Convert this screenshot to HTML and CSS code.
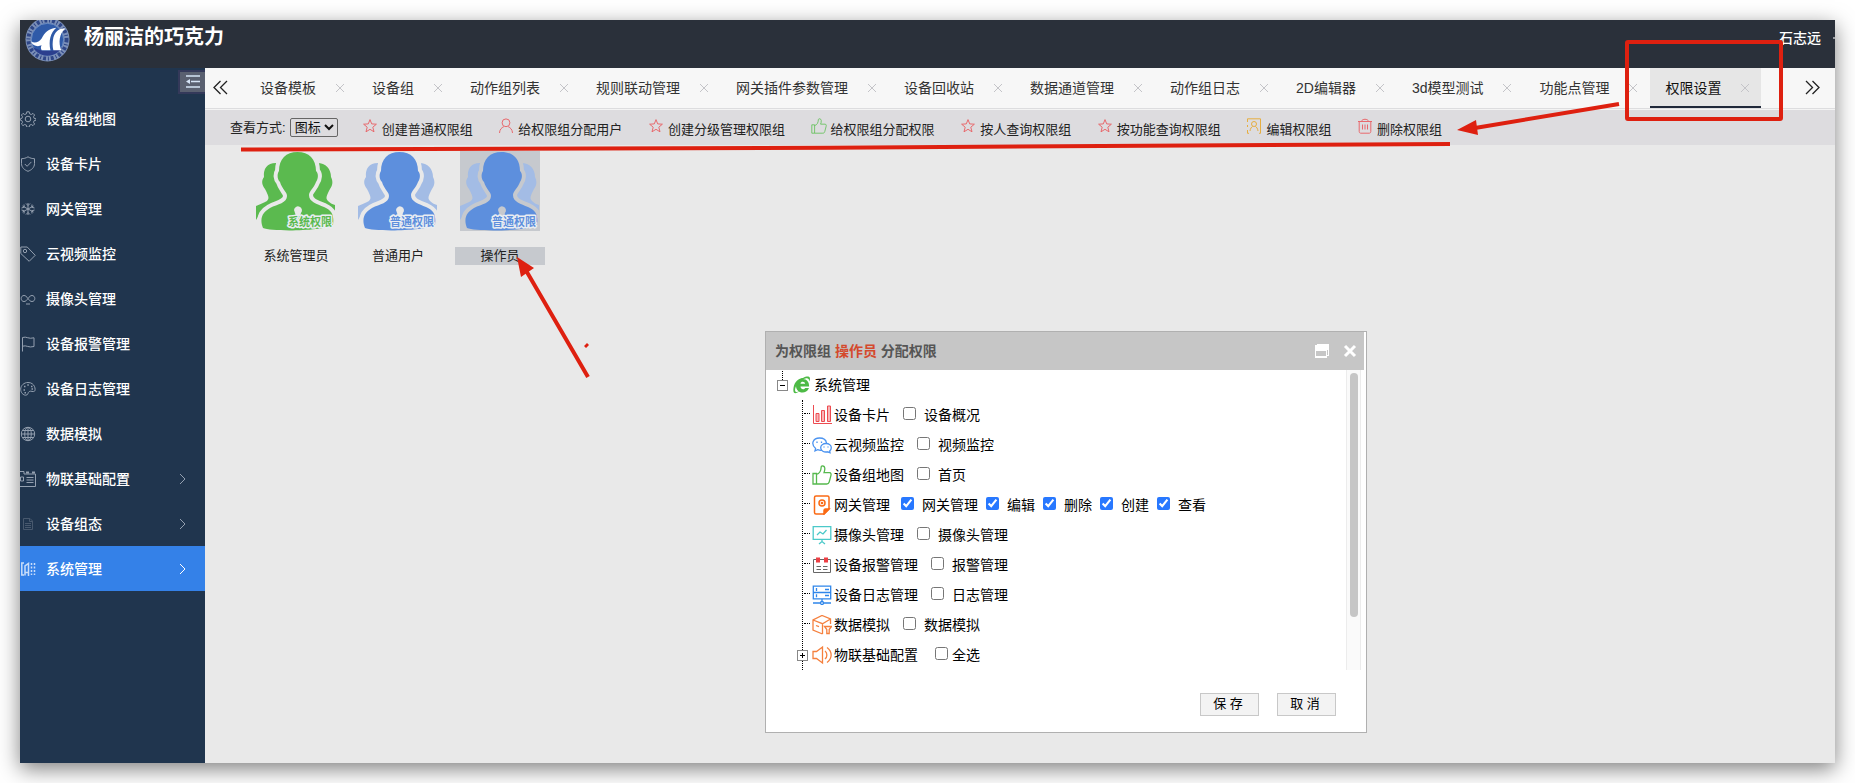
FILE: index.html
```html
<!DOCTYPE html>
<html lang="zh-CN">
<head>
<meta charset="utf-8">
<title>权限设置</title>
<link rel="stylesheet" href="styles.css">
</head>
<body>
<svg class="sprite" aria-hidden="true">
  <symbol id="i-x" viewBox="0 0 10 10"><path d="M1 1l8 8M9 1l-8 8"/></symbol>
  <symbol id="i-chev" viewBox="0 0 8 12"><path d="M1 1l5 5-5 5"/></symbol>
  <symbol id="i-star" viewBox="0 0 16 16"><path d="M8 1.6l1.7 4.3 4.7.3-3.6 3 1.2 4.6L8 11.300l-4 2.500 1.200-4.600-3.600-3 4.700-.3z"/></symbol>
  <symbol id="i-user" viewBox="0 0 16 16"><circle cx="8" cy="4.800" r="3.900"/><path d="M1.500 15c.2-3.500 2-5.300 4.300-6.300M14.500 15c-.2-3.500-2-5.300-4.300-6.300"/></symbol>
  <symbol id="i-thumb" viewBox="0 0 20 20"><path d="M1 8.500h3.500v10.500H1zM4.500 9.500c3.500-1 4.500-4 4.700-7.500.1-1.500 3.300-1.500 3.600 1 .2 1.800-.3 3.500-.8 4.700h5.500c1.600 0 1.800 1.500 1.400 2.900l-1.700 6.400c-.4 1.400-1 2-2.500 2H4.500"/></symbol>
  <symbol id="i-card" viewBox="0 0 16 16"><path d="M3 15.300H1.500V12M1.500 9V7M1.500 4V.8h13v14.500H13"/><circle cx="8" cy="6" r="2.500"/><path d="M4 13c.3-2.500 1.500-4 2.600-4.600M12 13c-.3-2.500-1.500-4-2.600-4.600"/></symbol>
  <symbol id="i-trash" viewBox="0 0 16 16"><path d="M1 3.500h14M4.500 3.300C5 .6 11 .6 11.500 3.300M2.200 3.500v10c0 1 .6 1.700 1.600 1.700h8.400c1 0 1.600-.7 1.600-1.700v-10M5.500 6.500v5M8 6.500v5M10.500 6.500v5"/></symbol>

  <symbol id="s-gear" viewBox="0 0 16 16"><circle cx="8" cy="8" r="2.800"/><path d="M6.800.8h2.400l.4 2 1.700.7 1.700-1.100 1.600 1.600-1.100 1.700.7 1.700 2 .4v1.400l-2 .4-.7 1.700 1.100 1.700-1.600 1.600-1.700-1.100-1.700.7-.4 2H6.800l-.4-2-1.700-.7L3 14.600 1.400 13l1.100-1.700-.7-1.700-1.500-.4V7.800l1.500-.4.7-1.700L1.400 4 3 2.400l1.700 1.100 1.700-.7z"/></symbol>
  <symbol id="s-shield" viewBox="0 0 16 16"><path d="M8 .8c2 1.300 4.300 1.900 6.500 1.900v4.800c0 4-3 6.500-6.500 7.800C4.500 14 1.500 11.500 1.500 7.500V2.700C3.700 2.700 6 2.100 8 .8zM4.800 8l2.300 2.300 4.300-4.400"/></symbol>
  <symbol id="s-snow" viewBox="0 0 16 16"><path d="M8 2v12M2.500 5l11 6M13.500 5l-11 6M6 2.500l2 2 2-2M6 13.500l2-2 2 2M1.500 7l2.700-.8L4 3.500M14.500 9l-2.700.8.200 2.700M1.500 9l2.700.8-.2 2.700M14.500 7l-2.700-.8.200-2.700"/></symbol>
  <symbol id="s-tag" viewBox="0 0 16 16"><path d="M.8 1h6.400l8 8.300-6 6L.8 7.500z"/><circle cx="5" cy="5" r="1.700"/></symbol>
  <symbol id="s-inf" viewBox="0 0 16 16"><path d="M8 7.500C6.500 5.500 5.500 4.500 4 4.500 2.300 4.500 1.200 5.700 1.200 7.500S2.300 10.500 4 10.500 6.500 9.500 8 7.500 10.500 4.500 12 4.500s2.800 1.200 2.800 3-1.100 3-2.800 3S9.500 9.500 8 7.500zM6 13h4"/></symbol>
  <symbol id="s-flag" viewBox="0 0 16 16"><path d="M2.500 15.500V1.500c4-1.500 6 2 11.500.3v8.700c-5.500 1.700-7.500-1.800-11.500-.3"/></symbol>
  <symbol id="s-pal" viewBox="0 0 16 16"><path d="M8 1.500c-4 0-7.300 3-7.300 6.700 0 3.500 2.500 6 5 6 2.800 0 1.800-2.700 3.600-3.700 1.700-1 3.800.8 5.200-.3C16 9 15 1.500 8 1.500z"/><path stroke-width="1.500" d="M4 5.500h1.500M7.300 4h1.500M11 5.500h1.500M3.500 9H5M4.500 11.700H6M11.500 8H13"/></symbol>
  <symbol id="s-globe" viewBox="0 0 16 16"><circle cx="8" cy="8" r="6.700"/><ellipse cx="8" cy="8" rx="3.300" ry="6.700"/><path d="M8 1.300v13.400M1.300 8h13.400M2.500 4.500h11M2.500 11.500h11"/></symbol>
  <symbol id="s-cfg" viewBox="0 0 16 16"><path d="M0 15.500h15.500V3H4V.5H0M.5 6h3v4h-3zM6.500 6.500h7M6.500 9h7M6.500 11.500h7"/><path stroke-width="2" d="M6 1.500h3M12 1.500h3"/></symbol>
  <symbol id="s-doc" viewBox="0 0 16 16"><path d="M3.500 2.500h6.500l2.500 2.500v8.500h-9zM9.500 2.500v3h3M5 7.500h6M5 9.500h6M5 11.500h6"/></symbol>
  <symbol id="s-sys" viewBox="0 0 16 16"><path stroke-width="1.500" d="M4 2H1.800v12H4M5 14.500V5l3.500-2.500V15M5 11.500h3"/><path stroke-width="1.500" stroke-dasharray="2 1.500" d="M11.500 2v12M14.500 2v12"/></symbol>

  <symbol id="person" viewBox="0 0 80 80">
    <g class="back">
      <path d="M20 12C11 12 7 18 8 26c-3 4-2 8 1 12 3 6 5 9 2 12C8 52 4 53 0 55v14c4-8 14-12 26-16l6-8-12-20z"/>
      <path d="M61 12c9 0 14 6 14 14 2 4 2 8-1 12-3 6-5 9-2 12 2 2 4 3 7 4v14C76 60 70 57 60 53l-7-8 9-20z"/>
    </g>
    <path class="front" d="M41.500 1C53 1 60 8 60 20c3 3 2 8 0 11-2 6-7 9-7 13 0 7 8 9 15 12 9 4 10 9 9 18-8 6-61 7-70 3-4-10 0-16 7-20 8-4 17-5 17-12 0-4-5-7-7-14-3-3-3-8-1-11C23 8 30 1 41.500 1z"/>
    <path class="hole" d="M38 59a4 4 0 1 1 7 3l-1 3h-4l-1-3z"/>
  </symbol>
</svg>

<div class="window">
  <header class="topbar">
    <svg class="logo" viewBox="0 0 46 46" aria-hidden="true">
      <circle cx="23" cy="23" r="22.500" fill="#7c90b8"/>
      <circle cx="23" cy="23" r="19.500" fill="none" stroke="#2e4687" stroke-width="4" stroke-dasharray="3 2 1 2"/>
      <circle cx="23" cy="23" r="16.500" fill="#2f5aa8" stroke="#6d8cc2"/>
      <path d="M8 31c8 5 22 5 30 0-3 5-8 8.500-15 8.500S11 36 8 31z" fill="#2b3f8e"/>
      <path d="M6 25c4 2 8 1 11-3 3-6 7-10 15-11-6 5-8 13-6 23h-9c-1-2-1-3 0-5-5 2-9 0-11-4z" fill="#fff"/>
      <path d="M41 12c-6-1-10 3-12 9-1 5-1 9 0 13h8c-3-8-2-17 4-22z" fill="#fff"/>
    </svg>
    <h1 class="brand">杨丽洁的巧克力</h1>
    <button class="account" type="button">石志远<span class="caret"></span></button>
  </header>

  <div class="body">
    <nav class="sidebar">
      <button class="collapse" type="button" aria-label="收起菜单">
        <svg viewBox="0 0 14 14"><path d="M0 1h14M5 6.500h9M0 12h14"/><path class="solid" d="M0 6.500l4-2.500v5z"/></svg>
      </button>
      <a class="nav" href="#"><svg><use href="#s-gear"/></svg><span>设备组地图</span></a>
      <a class="nav" href="#"><svg><use href="#s-shield"/></svg><span>设备卡片</span></a>
      <a class="nav" href="#"><svg><use href="#s-snow"/></svg><span>网关管理</span></a>
      <a class="nav" href="#"><svg><use href="#s-tag"/></svg><span>云视频监控</span></a>
      <a class="nav" href="#"><svg><use href="#s-inf"/></svg><span>摄像头管理</span></a>
      <a class="nav" href="#"><svg><use href="#s-flag"/></svg><span>设备报警管理</span></a>
      <a class="nav" href="#"><svg><use href="#s-pal"/></svg><span>设备日志管理</span></a>
      <a class="nav" href="#"><svg><use href="#s-globe"/></svg><span>数据模拟</span></a>
      <a class="nav" href="#"><svg><use href="#s-cfg"/></svg><span>物联基础配置</span><svg class="chev"><use href="#i-chev"/></svg></a>
      <a class="nav" href="#"><svg class="dim"><use href="#s-doc"/></svg><span>设备组态</span><svg class="chev"><use href="#i-chev"/></svg></a>
      <a class="nav active" href="#"><svg><use href="#s-sys"/></svg><span>系统管理</span><svg class="chev"><use href="#i-chev"/></svg></a>
    </nav>

    <main class="main">
      <div class="tabbar">
        <button class="scroll" type="button" aria-label="向左"><svg viewBox="0 0 15 15"><path d="M7.500 1L1 7.500 7.500 14M14 1L7.500 7.500 14 14"/></svg></button>
        <div class="tabs">
          <div class="tab"><a href="#">设备模板</a><button type="button" aria-label="关闭"><svg><use href="#i-x"/></svg></button></div>
          <div class="tab"><a href="#">设备组</a><button type="button" aria-label="关闭"><svg><use href="#i-x"/></svg></button></div>
          <div class="tab"><a href="#">动作组列表</a><button type="button" aria-label="关闭"><svg><use href="#i-x"/></svg></button></div>
          <div class="tab"><a href="#">规则联动管理</a><button type="button" aria-label="关闭"><svg><use href="#i-x"/></svg></button></div>
          <div class="tab"><a href="#">网关插件参数管理</a><button type="button" aria-label="关闭"><svg><use href="#i-x"/></svg></button></div>
          <div class="tab"><a href="#">设备回收站</a><button type="button" aria-label="关闭"><svg><use href="#i-x"/></svg></button></div>
          <div class="tab"><a href="#">数据通道管理</a><button type="button" aria-label="关闭"><svg><use href="#i-x"/></svg></button></div>
          <div class="tab"><a href="#">动作组日志</a><button type="button" aria-label="关闭"><svg><use href="#i-x"/></svg></button></div>
          <div class="tab"><a href="#">2D编辑器</a><button type="button" aria-label="关闭"><svg><use href="#i-x"/></svg></button></div>
          <div class="tab"><a href="#">3d模型测试</a><button type="button" aria-label="关闭"><svg><use href="#i-x"/></svg></button></div>
          <div class="tab"><a href="#">功能点管理</a><button type="button" aria-label="关闭"><svg><use href="#i-x"/></svg></button></div>
          <div class="tab current"><a href="#">权限设置</a><button type="button" aria-label="关闭"><svg><use href="#i-x"/></svg></button></div>
        </div>
        <button class="scroll right" type="button" aria-label="向右"><svg viewBox="0 0 15 15"><path d="M1 1l6.500 6.500L1 14M7.500 1L14 7.500 7.500 14"/></svg></button>
      </div>

      <div class="toolbar">
        <label for="view">查看方式:</label>
        <select id="view"><option>图标</option></select>
        <div class="actions">
          <button class="red" type="button"><svg><use href="#i-star"/></svg>创建普通权限组</button>
          <button class="red" type="button"><svg><use href="#i-user"/></svg>给权限组分配用户</button>
          <button class="red" type="button"><svg><use href="#i-star"/></svg>创建分级管理权限组</button>
          <button class="green" type="button"><svg><use href="#i-thumb"/></svg>给权限组分配权限</button>
          <button class="red" type="button"><svg><use href="#i-star"/></svg>按人查询权限组</button>
          <button class="red" type="button"><svg><use href="#i-star"/></svg>按功能查询权限组</button>
          <button class="gold" type="button"><svg><use href="#i-card"/></svg>编辑权限组</button>
          <button class="red" type="button"><svg><use href="#i-trash"/></svg>删除权限组</button>
        </div>
      </div>

      <div class="groups">
        <figure class="group system">
          <svg viewBox="0 0 80 80"><use href="#person"/><text x="76" y="75">系统权限</text></svg>
          <figcaption>系统管理员</figcaption>
        </figure>
        <figure class="group">
          <svg viewBox="0 0 80 80"><use href="#person"/><text x="76" y="75">普通权限</text></svg>
          <figcaption>普通用户</figcaption>
        </figure>
        <figure class="group selected">
          <svg viewBox="0 0 80 80"><use href="#person"/><text x="76" y="75">普通权限</text></svg>
          <figcaption>操作员</figcaption>
        </figure>
      </div>

      <section class="dialog" role="dialog" aria-labelledby="dlg-title">
        <div class="dialog-head">
          <h2 id="dlg-title">为权限组 <em>操作员</em> 分配权限</h2>
          <button type="button" aria-label="最大化"><svg viewBox="0 0 14 14"><path class="solid" fill-rule="evenodd" d="M2 0h12v12h-2v2H0V1h2zM1 7v5h10V7zM12 6v5h1V6z"/></svg></button>
          <button type="button" aria-label="关闭"><svg class="cross" viewBox="0 0 14 14"><path d="M2 2l10 10M12 2L2 12"/></svg></button>
        </div>
        <div class="scroller">
          <div class="tree">
            <div class="root">
              <button class="toggle" type="button" aria-label="折叠"><svg viewBox="0 0 9 9"><path d="M2 4.500h5"/></svg></button>
              <svg class="ie" viewBox="0 0 18 18"><path d="M16 12C14.500 15.500 12 16.500 9.700 16.500 5.500 16.500 3 13.500 3 9.700S6 3 9.700 3c4.300 0 6.600 3.200 6.400 7.500H7.500c.2 3.300 3.700 3.500 4.700 1.500zM7.500 7.800h4.600c-.3-2.600-4.300-2.700-4.600 0z"/><path d="M1 9.500C3 4 7 2 10 2 13 .3 16 .2 16.700 1.500c.5 1 .3 2.500-.4 4-.2-2.800-1.500-3.800-4-3C8 3.500 4.500 7 2.700 11c-1 2.600-.9 4.600.5 5 1 .2 2-.1 3.300-.9-2 1.900-4.500 2.800-5.500 1.700-1-1.100-.8-4.300 0-7.300z"/></svg>
              <span>系统管理</span>
            </div>
            <ul class="children">
              <li><svg class="ic" viewBox="0 0 20 20" stroke="#ed4b50"><path d="M1.500 0v18.500H20"/><path fill="#f8b5b7" d="M4 8.500h3v8H4zM9.500 5.500h3v11h-3zM15.500 1h3v15.500h-3z"/></svg><span class="name">设备卡片</span><label><input type="checkbox">设备概况</label></li>
              <li><svg class="ic" viewBox="0 0 20 20" stroke="#4b93f0" stroke-width="1.300"><path d="M10 15.200c-1.500.3-3 0-4.300-.6L3 15.800l.6-2.400C-1.500 9 1 3 7.500 3c4 0 6.500 2 7 5"/><path d="M14 8.500c3 0 5.300 1.800 5.300 4.200 0 1.400-.6 2.400-1.600 3.200l.3 1.900-2.300-1c-3.700.8-7-1-7-4.100 0-2.300 2.300-4.200 5.300-4.200zM5 6.500v1.500M9.500 6.500v1.500M12 11.500v1M16 11.500v1"/></svg><span class="name">云视频监控</span><label><input type="checkbox">视频监控</label></li>
              <li><svg class="ic" viewBox="0 0 20 20" stroke="#56b94e" stroke-width="1.300"><use href="#i-thumb"/></svg><span class="name">设备组地图</span><label><input type="checkbox">首页</label></li>
              <li class="many"><svg class="ic" viewBox="0 0 20 20" stroke="#fa6a14" stroke-width="1.500"><path d="M12 19H4c-1 0-1.500-.5-1.500-1.500v-15C2.500 1.500 3 1 4 1h11.500c1 0 1.500.5 1.500 1.500V14z"/><path fill="#fa6a14" d="M12 19v-3.500c0-1 .5-1.500 1.500-1.500H17z"/><circle cx="10" cy="8" r="3"/><circle cx="10" cy="8" r=".6"/></svg><span class="name">网关管理</span><label><input type="checkbox" checked>网关管理</label><label><input type="checkbox" checked>编辑</label><label><input type="checkbox" checked>删除</label><label><input type="checkbox" checked>创建</label><label><input type="checkbox" checked>查看</label></li>
              <li><svg class="ic" viewBox="0 0 20 20" stroke="#4bc9c9" stroke-width="1.300"><path d="M1.200 1.700h17.600v12.600H1.200zM10 14.500V17M7 19l3-2.500 3 2.500M5 10l3-3 3 2 3.500-4"/></svg><span class="name">摄像头管理</span><label><input type="checkbox">摄像头管理</label></li>
              <li><svg class="ic" viewBox="0 0 20 20" stroke="#666"><path d="M1.500 4.500h17v13h-17zM4.500 11.500H9M11 11.500h4.500M4.500 14.500H9M11 14.500h4.500"/><path fill="#ed3f44" stroke="none" d="M4 2.500h4v5H4zM12 2.500h4v5h-4z"/></svg><span class="name">设备报警管理</span><label><input type="checkbox">报警管理</label></li>
              <li><svg class="ic" viewBox="0 0 20 20" stroke="#2f86ea" stroke-width="1.300"><path d="M1.300 1.200h17.400v12.600H1.300zM1.300 7.500h17.400M4.500 3v3M4.500 9.200v3M13 4.500h4M13 10.500h4M1 18h7M12 18h7M10 14v2"/><circle cx="10" cy="18" r="1.500"/></svg><span class="name">设备日志管理</span><label><input type="checkbox">日志管理</label></li>
              <li><svg class="ic" viewBox="0 0 20 20" stroke="#f5803e" stroke-width="1.300"><path d="M10.500 19L1 15V5l9-4.500L18.500 4v5M1 5l9.500 3.700L18.500 4M10.500 8.700V19M4 10.500l3 1.200M12.500 11.500h7l-2.300 3v4h-2.400v-4z"/></svg><span class="name">数据模拟</span><label><input type="checkbox">数据模拟</label></li>
              <li class="branch"><button class="toggle" type="button" aria-label="展开"><svg viewBox="0 0 9 9"><path d="M2 4.500h5M4.500 2v5"/></svg></button><svg class="ic" viewBox="0 0 20 20" stroke="#f5803e" stroke-width="1.300"><path d="M1 6.500h3.500L10.500 2v16l-6-4.500H1zM13 6c2.500 2 2.500 6 0 8M15 2.500c5.500 4 5.500 11 0 15"/></svg><span class="name">物联基础配置</span><label><input type="checkbox">全选</label></li>
            </ul>
          </div>
          <div class="track"><div class="thumb"></div></div>
        </div>
        <div class="dialog-foot">
          <button type="button">保 存</button>
          <button type="button">取 消</button>
        </div>
      </section>
    </main>
  </div>
</div>

<svg class="marks" viewBox="0 0 1855 783" aria-hidden="true">
  <path d="M241 149.500C600 147 1100 149 1450 144"/>
  <rect x="1627" y="42" width="154" height="77" rx="1"/>
  <path d="M1619 104L1475 128M588 377L524 267"/>
  <path class="solid" d="M1457 130l19-10 2 15zM517 257l17 11-13 9zM584 346l3-3 2 2-3 3z"/>
</svg>
</body>
</html>
```

FILE: styles.css
```css
* { box-sizing: border-box; }

body {
  margin: 0;
  padding: 20px;
  min-height: 100vh;
  position: relative;
  display: flex;
  overflow: hidden;
  background: #fff;
  color: #222;
  font: 14px/20px "Liberation Sans", "Noto Sans CJK SC", sans-serif;
}

button {
  font: inherit;
  color: inherit;
  background: none;
  border: 0;
  padding: 0;
}

a { color: inherit; text-decoration: none; }

svg {
  display: block;
  flex: none;
  fill: none;
}

svg:where(:not([stroke])) { stroke: currentColor; }

.solid { fill: currentColor; stroke: none; }

.sprite { position: absolute; width: 0; height: 0; }

.window {
  flex: 1;
  min-width: 0;
  display: flex;
  flex-direction: column;
  background: #e9e9e9;
  box-shadow: 0 6px 20px rgba(0, 0, 0, .5);
}

/* top bar */
.topbar {
  height: 48px;
  display: flex;
  align-items: flex-start;
  padding-left: 5px;
  overflow: hidden;
  background: #2a303a;
  color: #fff;
}

.logo { width: 45px; height: 45px; margin-top: -3px; stroke: none; }

.brand {
  margin: 0 0 0 14px;
  font-size: 20px;
  line-height: 34px;
  font-weight: 700;
}

.account {
  margin-left: auto;
  display: flex;
  align-items: center;
  gap: 12px;
  line-height: 36px;
  font-weight: 500;
}

.caret { width: 2px; height: 2px; background: #9a9da3; }

.body { flex: 1; display: flex; }

/* side menu */
.sidebar {
  width: 185px;
  flex: none;
  display: flex;
  flex-direction: column;
  background: #20354e;
  color: #fff;
}

.collapse {
  align-self: flex-end;
  display: grid;
  place-items: center;
  width: 27px;
  height: 24px;
  margin: 2px 0;
  border: 2px solid #34395a;
  border-right: 0;
  background: #5a6070;
  color: #d5e3f5;
}

.collapse svg { width: 14px; height: 14px; stroke-width: 1.5; }

.nav {
  height: 45px;
  display: flex;
  align-items: center;
  gap: 10px;
  padding-right: 18px;
  font-weight: 500;
}

.nav svg { width: 16px; height: 16px; color: #94a0b0; }
.nav svg.dim { color: #48596e; }
.nav svg.chev { width: 8px; height: 12px; margin-left: auto; }
.nav.active { background: #3481e8; }
.nav.active svg { color: #c9def9; }
.nav.active svg.chev { color: #fff; }

/* tabs */
.main { flex: 1; min-width: 0; position: relative; }

.tabbar {
  display: flex;
  height: 42px;
  background: #f7f7f7;
  border-bottom: 1px solid #f4f4f4;
}

.scroll {
  width: 40px;
  display: flex;
  align-items: center;
  padding: 0 0 1px 8px;
  border-bottom: 1px solid #dddddf;
}

.scroll svg { width: 15px; height: 15px; stroke-width: 1.3; }
.scroll.right { width: 38px; padding-left: 8px; }

.tabs {
  flex: 1;
  min-width: 0;
  display: flex;
  gap: 1px;
  border-bottom: 1px solid #dddddf;
}

.tab {
  display: flex;
  align-items: center;
  padding: 2px 11px 2px 15px;
  white-space: nowrap;
  color: #333;
}

.tab button { padding: 0 0 0 19px; color: #c4c4c8; }
.tab svg { width: 10px; height: 10px; }

.tab.current {
  background: #e6e6e6;
  color: #111;
  padding-bottom: 0;
  border-bottom: 2px solid #20293a;
}

/* toolbar */
.toolbar {
  display: flex;
  align-items: center;
  height: 35px;
  padding-left: 25px;
  background: #dddcdf;
  font-size: 13px;
}

.toolbar select {
  width: 48px;
  height: 19px;
  margin: 0 0 0 4px;
  padding: 0;
  border: 1px solid #666;
  border-radius: 2px;
  background: transparent;
  color: #111;
  font: inherit;
  line-height: 17px;
}

.actions { padding: 3px 0 0 24px; white-space: nowrap; }
.actions button { margin-right: 22px; }

.actions svg {
  display: inline-block;
  width: 16px;
  height: 16px;
  margin-right: 4px;
  vertical-align: 0;
}

.red svg { color: #e8696d; }
.green svg { color: #5cc052; }
.gold svg { color: #e6ae42; }

/* permission groups */
.groups {
  display: flex;
  gap: 12px;
  padding: 6px 46px;
}

.group {
  --paper: #e9e9e9;
  --front: #5d8fdd;
  --back: #a3bce5;
  width: 90px;
  margin: 0;
  font-size: 13px;
}

.group.system { --front: #5bba4f; --back: #5bba4f; }
.group.selected { --paper: #c6c9ce; }

.group svg {
  width: 80px;
  height: 80px;
  margin: 0 auto 16px 5px;
  background: var(--paper);
  stroke: none;
}

.back { fill: var(--back); }
.front { fill: var(--front); stroke: var(--paper); stroke-width: 8px; paint-order: stroke; }
.hole { fill: var(--paper); }

.group text {
  font-size: 11px;
  font-weight: 700;
  text-anchor: end;
  fill: var(--front);
  stroke: #e9edf2;
  stroke-width: 3px;
  stroke-linejoin: round;
  paint-order: stroke;
}

.group figcaption {
  line-height: 18px;
  text-align: center;
  background: var(--paper);
}

/* dialog */
.dialog {
  position: absolute;
  left: 560px;
  top: 263px;
  width: 602px;
  border: 1px solid #b0b0b0;
  background: #fff;
  color: #000;
}

.dialog-head {
  display: flex;
  align-items: center;
  gap: 14px;
  height: 38px;
  margin-right: 2px;
  padding: 0 7px 0 9px;
  background: #c6c6c6;
  color: #fff;
}

.dialog-head h2 {
  flex: 1;
  margin: 0;
  font-size: 14px;
  font-weight: 700;
  color: #555;
}

.dialog-head em { font-style: normal; color: #d4492c; }
.dialog-head svg { width: 14px; height: 14px; }
.cross { stroke-width: 3px; }

.scroller {
  display: flex;
  height: 300px;
  margin-right: 5px;
  overflow: hidden;
}

.tree { flex: 1; }

.root {
  position: relative;
  display: flex;
  align-items: center;
  height: 30px;
  padding-left: 12px;
}

.root::before {
  content: "";
  position: absolute;
  left: 16px;
  top: 1px;
  height: 9px;
  border-left: 1px dotted #000;
}

.toggle {
  position: relative;
  width: 9px;
  height: 9px;
  background: #fff;
  outline: 1px solid #888;
  color: #000;
}

.toggle svg { width: 9px; height: 9px; }

.ie {
  width: 18px;
  height: 18px;
  margin: 0 3px 0 6px;
  fill: #4dba45;
  stroke: none;
}

.children {
  list-style: none;
  margin: 0 0 0 36px;
  padding: 0;
  border-left: 1px dotted #000;
}

.children li {
  display: flex;
  align-items: center;
  height: 30px;
}

.children li::before {
  content: "";
  width: 6px;
  margin: 0 2px 4px 1px;
  border-top: 1px dotted #000;
}

.children .branch::before { display: none; }
.branch .toggle { margin: 0 5px 0 -5px; }
.children .branch .name { margin-right: 17px; }
.children .branch label { gap: 4px; }

.ic { width: 20px; height: 20px; margin-right: 2px; }
.name { margin-right: 13px; }
.many .name { margin-right: 11px; }

.children label {
  display: flex;
  align-items: center;
  gap: 8px;
}

.many label { margin-right: 8px; }

.children input {
  width: 13px;
  height: 13px;
  margin: 0 0 3px;
  accent-color: #2878ff;
}

.track {
  width: 15px;
  padding: 3px 2px 0 3px;
  border: solid #ececec;
  border-width: 0 1px;
  background: #fafafa;
}

.thumb {
  width: 8px;
  height: 244px;
  border-radius: 4px;
  background: #c6c6c6;
}

.dialog-foot {
  display: flex;
  justify-content: flex-end;
  gap: 18px;
  padding: 23px 30px 16px;
}

.dialog-foot button {
  width: 59px;
  height: 23px;
  border: 1px solid #c8c8c8;
  background: #f3f3f3;
  font-size: 13px;
  line-height: 18px;
  padding: 0 3px 2px 0;
}

/* red pen marks over the page */
.marks {
  position: absolute;
  left: 0;
  top: 0;
  width: 1855px;
  height: 783px;
  pointer-events: none;
  color: #de2010;
  stroke-width: 4px;
}
```
